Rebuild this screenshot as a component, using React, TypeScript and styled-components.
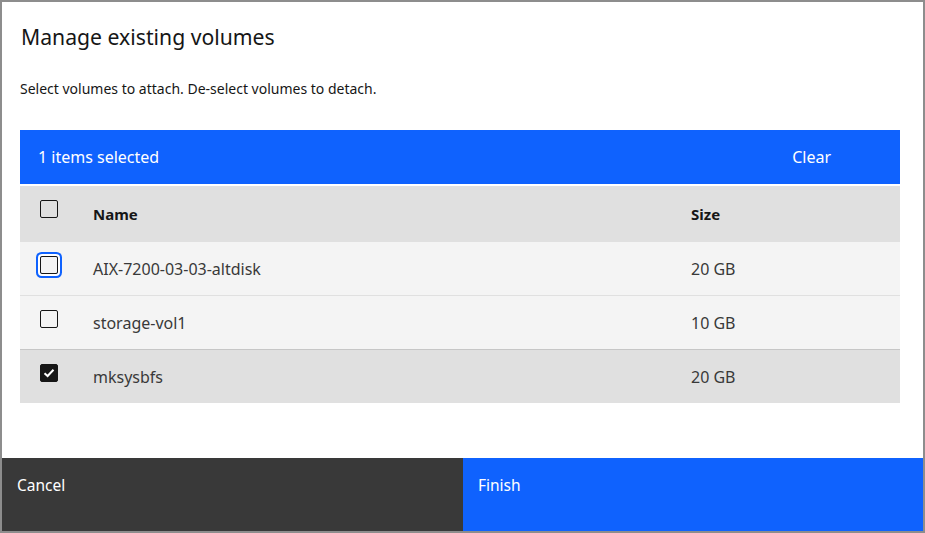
import React from 'react';
import styled, { createGlobalStyle, css } from 'styled-components';

const GlobalStyle = createGlobalStyle`
  html, body {
    margin: 0;
    padding: 0;
    background: #8d8d8d;
  }
  * {
    box-sizing: border-box;
  }
  body {
    font-family: "Noto Sans", "Open Sans", Arial, sans-serif;
    color: #161616;
  }
`;

const Frame = styled.div`
  width: 925px;
  height: 533px;
  border: 2px solid #8d8d8d;
  background: #ffffff;
  display: flex;
  flex-direction: column;
`;

const Body = styled.div`
  flex: 1;
  padding: 21px 23px 0 18px;
`;

const Title = styled.h2`
  margin: 0 0 0 1px;
  font-size: 21.2px;
  font-weight: 400;
  line-height: 28px;
  color: #161616;
`;

const Description = styled.p`
  margin: 28px 0 31px 0;
  font-size: 14px;
  line-height: 20px;
  color: #161616;
`;

const BatchBar = styled.div`
  height: 54px;
  background: #0f62fe;
  color: #ffffff;
  display: flex;
  align-items: center;
  justify-content: space-between;
  padding: 0 69px 0 18px;
  font-size: 16px;
  margin-bottom: 2px;
`;

const ClearButton = styled.button`
  background: none;
  border: none;
  color: #ffffff;
  font: inherit;
  padding: 0;
  cursor: pointer;
`;

const Row = styled.div<{ $variant: 'head' | 'plain' | 'selected' }>`
  display: grid;
  grid-template-columns: 73px 598px 1fr;
  height: 54px;
  align-items: start;
  font-size: 16px;

  ${({ $variant }) =>
    $variant === 'head' &&
    css`
      background: #e0e0e0;
      height: 55px;
      font-size: 15px;
      font-weight: 700;
      color: #161616;
    `}

  ${({ $variant }) =>
    $variant === 'plain' &&
    css`
      background: #f4f4f4;
      border-top: 1px solid #e0e0e0;
      color: #393939;
    `}

  ${({ $variant }) =>
    $variant === 'selected' &&
    css`
      background: #e0e0e0;
      border-top: 1px solid #c6c6c6;
      color: #393939;
    `}
`;

const Cell = styled.div`
  height: 100%;
  display: flex;
  align-items: center;
`;

const CheckCell = styled.div`
  padding: 14px 0 0 20px;
`;

const Box = styled.span<{ $checked?: boolean; $focused?: boolean }>`
  display: flex;
  align-items: center;
  justify-content: center;
  width: 18px;
  height: 18px;
  border: 1px solid #161616;
  border-radius: 2px;
  background: ${({ $checked }) => ($checked ? '#161616' : 'transparent')};
  ${({ $focused }) =>
    $focused &&
    css`
      box-shadow: 0 0 0 2px #ffffff, 0 0 0 4px #0f62fe;
    `}
`;

const Footer = styled.div`
  height: 73px;
  display: grid;
  grid-template-columns: 461px 1fr;
`;

const FooterButton = styled.button<{ $primary?: boolean }>`
  border: none;
  margin: 0;
  text-align: left;
  padding: 17px 15px 0 15px;
  display: flex;
  align-items: flex-start;
  font-family: inherit;
  font-size: 15.5px;
  line-height: 20px;
  color: #ffffff;
  background: ${({ $primary }) => ($primary ? '#0f62fe' : '#393939')};
  cursor: pointer;
`;

function Checkbox({ checked, focused }: { checked?: boolean; focused?: boolean }) {
  return (
    <CheckCell>
      <Box $checked={checked} $focused={focused}>
        {checked && (
          <svg width="12" height="10" viewBox="0 0 12 10">
            <path d="M1.5 5.2 L4.6 8 L10.5 1.8" fill="none" stroke="#ffffff" strokeWidth="2" />
          </svg>
        )}
      </Box>
    </CheckCell>
  );
}

const volumes = [
  { name: 'AIX-7200-03-03-altdisk', size: '20 GB', checked: false, focused: true },
  { name: 'storage-vol1', size: '10 GB', checked: false, focused: false },
  { name: 'mksysbfs', size: '20 GB', checked: true, focused: false },
];

export default function App() {
  return (
    <>
      <GlobalStyle />
      <Frame>
        <Body>
          <Title>Manage existing volumes</Title>
          <Description>Select volumes to attach. De-select volumes to detach.</Description>
          <BatchBar>
            <span>1 items selected</span>
            <ClearButton>Clear</ClearButton>
          </BatchBar>
          <Row $variant="head">
            <Checkbox />
            <Cell>Name</Cell>
            <Cell>Size</Cell>
          </Row>
          {volumes.map((v) => (
            <Row key={v.name} $variant={v.checked ? 'selected' : 'plain'}>
              <Checkbox checked={v.checked} focused={v.focused} />
              <Cell>{v.name}</Cell>
              <Cell>{v.size}</Cell>
            </Row>
          ))}
        </Body>
        <Footer>
          <FooterButton>Cancel</FooterButton>
          <FooterButton $primary>Finish</FooterButton>
        </Footer>
      </Frame>
    </>
  );
}
